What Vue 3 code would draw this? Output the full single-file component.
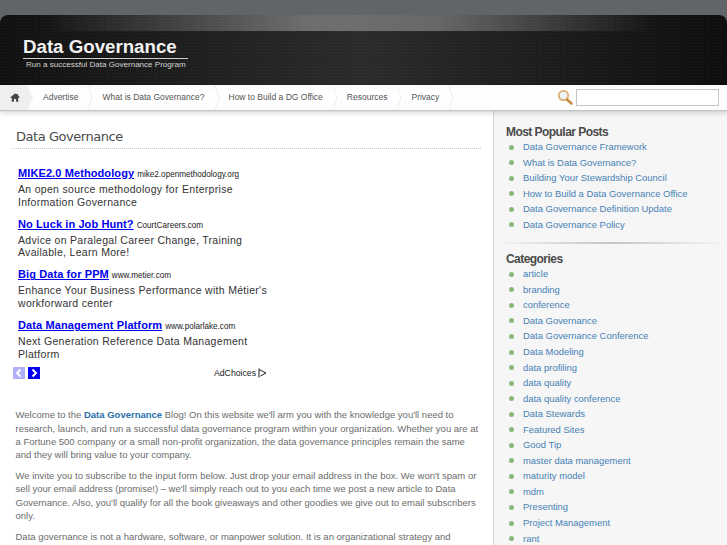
<template>
  <div class="page">
    <header class="masthead">
      <div class="brand">
        <h1 class="site-title">Data Governance</h1>
        <p class="tagline">Run a successful Data Governance Program</p>
      </div>
    </header>

    <nav class="nav">
      <a class="nav-home">
        <svg width="10" height="9" viewBox="0 0 14 12">
          <path d="M7 .5 0.5 5.500v1h2V12h3V8h3v4h3V6.500h2v-1L11 2.500V1H9.500v.4z" fill="#444" />
        </svg>
      </a>
      <a v-for="item in navItems" :key="item" class="nav-item">{{ item }}</a>
      <div class="search">
        <svg width="17" height="17" viewBox="0 0 17 17">
          <circle cx="6.500" cy="6.500" r="4.700" fill="#eef3f6" stroke="#dcae73" stroke-width="1.800" />
          <path d="M10 10.500 14.500 14.500" stroke="#c98c3e" stroke-width="2.600" stroke-linecap="round" />
        </svg>
        <input class="search-box" type="text" />
      </div>
    </nav>

    <div class="columns">
      <main class="content">
        <h2 class="page-title">Data Governance</h2>

        <section class="ads">
          <div v-for="ad in ads" :key="ad.title" class="ad">
            <div class="ad-head">
              <a class="ad-title">{{ ad.title }}</a>
              <span class="ad-url">{{ ad.url }}</span>
            </div>
            <p class="ad-text">{{ ad.text }}</p>
          </div>
          <div class="ad-foot">
            <span class="ad-arrow off">
              <svg width="12" height="12" viewBox="0 0 12 12"><path d="M7.500 2.500 4 6l3.500 3.500" fill="none" stroke="#fff" stroke-width="2" /></svg>
            </span>
            <span class="ad-arrow">
              <svg width="12" height="12" viewBox="0 0 12 12"><path d="M4.500 2.500 8 6 4.500 9.500" fill="none" stroke="#fff" stroke-width="2" /></svg>
            </span>
            <span class="ad-choices">AdChoices
              <svg width="9" height="10" viewBox="0 0 9 10"><path d="M1 .5v9M1 1.500 8 5 2.500 8" fill="none" stroke="#222" stroke-width="1" /></svg>
            </span>
          </div>
        </section>

        <section class="intro">
          <p>Welcome to the <a class="strong-link">Data Governance</a> Blog! On this website we'll arm you with the knowledge you'll need to research, launch, and run a successful data governance program within your organization. Whether you are at a Fortune 500 company or a small non-profit organization, the data governance principles remain the same and they will bring value to your company.</p>
          <p>We invite you to subscribe to the input form below. Just drop your email address in the box. We won't spam or sell your email address (promise!) – we'll simply reach out to you each time we post a new article to Data Governance. Also, you'll qualify for all the book giveaways and other goodies we give out to email subscribers only.</p>
          <p>Data governance is not a hardware, software, or manpower solution. It is an organizational strategy and methodology that focuses on the roles and standards needed to manage data as a key corporate asset across the</p>
        </section>
      </main>

      <aside class="sidebar">
        <div class="widget popular">
          <h3 class="widget-title">Most Popular Posts</h3>
          <ul class="widget-list">
            <li v-for="post in posts" :key="post"><a>{{ post }}</a></li>
          </ul>
        </div>
        <div class="divider"></div>
        <div class="widget">
          <h3 class="widget-title">Categories</h3>
          <ul class="widget-list">
            <li v-for="cat in categories" :key="cat"><a>{{ cat }}</a></li>
          </ul>
        </div>
      </aside>
    </div>
  </div>
</template>

<script setup>
const navItems = [
  'Advertise',
  'What is Data Governance?',
  'How to Build a DG Office',
  'Resources',
  'Privacy'
]

const ads = [
  {
    title: 'MIKE2.0 Methodology',
    url: 'mike2.openmethodology.org',
    text: 'An open source methodology for Enterprise Information Governance'
  },
  {
    title: 'No Luck in Job Hunt?',
    url: 'CourtCareers.com',
    text: 'Advice on Paralegal Career Change, Training Available, Learn More!'
  },
  {
    title: 'Big Data for PPM',
    url: 'www.metier.com',
    text: "Enhance Your Business Performance with Métier's workforward center"
  },
  {
    title: 'Data Management Platform',
    url: 'www.polarlake.com',
    text: 'Next Generation Reference Data Management Platform'
  }
]

const posts = [
  'Data Governance Framework',
  'What is Data Governance?',
  'Building Your Stewardship Council',
  'How to Build a Data Governance Office',
  'Data Governance Definition Update',
  'Data Governance Policy'
]

const categories = [
  'article',
  'branding',
  'conference',
  'Data Governance',
  'Data Governance Conference',
  'Data Modeling',
  'data profiling',
  'data quality',
  'data quality conference',
  'Data Stewards',
  'Featured Sites',
  'Good Tip',
  'master data management',
  'maturity model',
  'mdm',
  'Presenting',
  'Project Management',
  'rant'
]
</script>

<style>
html,
body {
  margin: 0;
  height: 545px;
  overflow: hidden;
  background: #fff;
}
</style>

<style scoped>
.page {
  width: 727px;
  height: 545px;
  overflow: hidden;
  font-family: "Liberation Sans", Arial, sans-serif;
  background: #5f6568;
}

.masthead {
  margin-top: 15px;
  height: 70px;
  box-sizing: border-box;
  padding: 22px 0 0 23px;
  border-radius: 8px 8px 0 0;
  background:
    radial-gradient(rgba(255, 255, 255, 0.05) 0.8px, transparent 1px) 0 0 / 3px 3px,
    linear-gradient(90deg, rgba(255, 255, 255, 0) 6%, rgba(255, 255, 255, 0.32) 42%, rgba(255, 255, 255, 0.3) 60%, rgba(255, 255, 255, 0) 90%) top / 100% 16px no-repeat,
    linear-gradient(90deg, #111 0%, #2b2b2b 50%, #0e0e0e 100%);
}

.brand {
  width: 165px;
}

.site-title {
  margin: 0;
  font-size: 18.7px;
  line-height: 20px;
  font-weight: bold;
  color: #f2f2f2;
  white-space: nowrap;
}

.tagline {
  margin: 1px 0 0;
  padding: 1px 0 0 3px;
  border-top: 1px solid #cfcfcf;
  font-size: 8.05px;
  line-height: 9px;
  color: #d5d5d5;
  white-space: nowrap;
}

.nav {
  display: flex;
  align-items: center;
  height: 25px;
  background: linear-gradient(#fbfbfb, #fff 30%, #fdfdfd);
  box-shadow: 0 1px 1px #c4c4c4, 0 3px 5px rgba(0, 0, 0, 0.16);
  position: relative;
  z-index: 1;
}

.nav-home {
  display: flex;
  align-items: center;
  justify-content: center;
  width: 33px;
  height: 100%;
  box-sizing: border-box;
  padding-right: 3px;
  background: #efefef;
  clip-path: polygon(0 0, 27px 0, 33px 50%, 28px 100%, 0 100%);
}

.nav-item {
  position: relative;
  height: 100%;
  line-height: 25px;
  padding: 0 14px 0 10px;
  font-size: 8.5px;
  color: #555;
  white-space: nowrap;
}

.nav-item::after {
  content: "";
  position: absolute;
  right: -5px;
  top: 3.5px;
  width: 18px;
  height: 18px;
  box-sizing: border-box;
  border-top: 1px solid #dedede;
  border-right: 1px solid #dedede;
  transform: scaleX(0.35) rotate(45deg);
}

.search {
  display: flex;
  align-items: center;
  gap: 2px;
  margin-left: auto;
  padding-right: 8px;
}

.search-box {
  width: 143px;
  height: 17px;
  box-sizing: border-box;
  border: 1px solid #c6c6c6;
  background: #fff;
  padding: 0;
  box-shadow: inset 0 0 1px #ddd;
}

.columns {
  display: flex;
  height: 435px;
  background: #fff;
}

.content {
  width: 493px;
  box-sizing: border-box;
  padding: 19px 12px 0 12px;
}

.page-title {
  margin: 0;
  padding: 0 0 0 4px;
  height: 19px;
  line-height: 16px;
  border-bottom: 1px dotted #c6c6c6;
  font-family: "DejaVu Sans", sans-serif;
  font-size: 13px;
  font-weight: normal;
  letter-spacing: -0.45px;
  color: #4b4b4b;
}

.ads {
  width: 255px;
  padding: 16px 0 0 6px;
}

.ad {
  margin-bottom: 7.5px;
}

.ad-head {
  line-height: 13px;
  white-space: nowrap;
}

.ad-title {
  font-size: 11px;
  font-weight: bold;
  color: #0000ee;
  text-decoration: underline;
  letter-spacing: 0.1px;
}

.ad-url {
  margin-left: 3px;
  font-size: 8.15px;
  color: #222;
}

.ad-text {
  margin: 2px 0 0;
  font-size: 10.5px;
  line-height: 12.6px;
  letter-spacing: 0.3px;
  color: #333;
}

.ad-foot {
  display: flex;
  align-items: center;
  gap: 3px;
  margin: -0.5px 6px 0 -5px;
  height: 12px;
}

.ad-arrow {
  display: flex;
  width: 12px;
  height: 12px;
  background: #0000ee;
}

.ad-arrow.off {
  background: #b0b0fa;
}

.ad-choices {
  display: flex;
  align-items: center;
  gap: 2px;
  margin-left: auto;
  font-size: 8.7px;
  font-weight: normal;
  color: #222;
}

.intro {
  margin-top: 29px;
  padding: 0 0 0 3.5px;
  font-size: 9.5px;
  line-height: 13.3px;
  color: #6c6c6c;
}

.intro p {
  margin: 0 0 7.5px;
}

.strong-link {
  font-weight: bold;
  color: #2a6fa8;
}

.sidebar {
  flex: 1;
  box-sizing: border-box;
  padding-top: 15px;
  border-left: 1px solid #d8d8d8;
  background: #f6f6f6;
}

.widget {
  padding-left: 12px;
}

.widget-title {
  margin: 0;
  font-size: 12px;
  line-height: 14px;
  font-weight: bold;
  letter-spacing: -0.55px;
  color: #4a4a4a;
}

.widget-list {
  margin: 0;
  padding: 0;
  list-style: none;
}

.widget-list li {
  position: relative;
  height: 15.55px;
  padding-left: 17px;
  font-size: 9.45px;
  line-height: 15.55px;
  color: #4681b4;
  white-space: nowrap;
}

.widget-list li::before {
  content: "";
  position: absolute;
  left: 3px;
  top: 5.5px;
  width: 5px;
  height: 5px;
  border-radius: 50%;
  background: #8ab87a;
}

.divider {
  height: 2px;
  margin: 10px 0 8px;
  background: linear-gradient(90deg, #f6f6f6, #c4c4c4 50%, #f6f6f6);
}
</style>
